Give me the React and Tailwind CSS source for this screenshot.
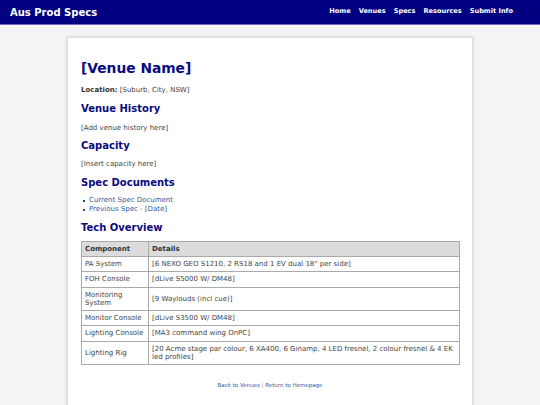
export default function App() {
  const rows = [
    ['PA System', '[6 NEXO GEO S1210, 2 RS18 and 1 EV dual 18" per side]'],
    ['FOH Console', '[dLive S5000 W/ DM48]'],
    ['Monitoring System', '[9 Waylouds (incl cue)]'],
    ['Monitor Console', '[dLive S3500 W/ DM48]'],
    ['Lighting Console', '[MA3 command wing OnPC]'],
    ['Lighting Rig', '[20 Acme stage par colour, 6 XA400, 6 Ginamp, 4 LED fresnel, 2 colour fresnel & 4 EK led profiles]'],
  ];

  return (
    <div className="min-h-screen bg-[#f4f4f4] font-['DejaVu_Sans',Verdana,sans-serif] text-[#444]">
      {/* Header */}
      <div className="h-[25px] bg-[#000080] border-b border-[#6a6ac8] flex items-center justify-between pl-[10px] pr-[27px]">
        <div className="text-white font-bold text-[10px]">Aus Prod Specs</div>
        <div className="flex gap-[8px] text-white font-bold text-[6.6px]">
          <a href="#">Home</a>
          <a href="#">Venues</a>
          <a href="#">Specs</a>
          <a href="#">Resources</a>
          <a href="#">Submit Info</a>
        </div>
      </div>

      {/* Main card */}
      <div className="w-[406px] mx-auto mt-[12px] bg-white border border-[#dcdcdc] shadow-[0_0_4px_rgba(0,0,0,0.12)] pt-[21px] px-[13px] pb-[30px]">
        <h1 className="text-[13.8px] leading-[18px] font-bold text-[#0a0a80]">[Venue Name]</h1>
        <p className="mt-[8px] text-[7px] leading-[10px]"><span className="font-bold text-[#333]">Location:</span> [Suburb, City, NSW]</p>

        <h2 className="mt-[7px] text-[10px] leading-[14px] font-bold text-[#0a0a80]">Venue History</h2>
        <p className="mt-[7px] text-[7px] leading-[10px]">[Add venue history here]</p>

        <h2 className="mt-[6px] text-[10px] leading-[14px] font-bold text-[#0a0a80]">Capacity</h2>
        <p className="mt-[6px] text-[7px] leading-[10px]">[Insert capacity here]</p>

        <h2 className="mt-[7px] text-[10px] leading-[14px] font-bold text-[#0a0a80]">Spec Documents</h2>
        <ul className="mt-[6px] text-[7px] leading-[9px] text-[#33599e]">
          <li className="flex items-center">
            <span className="w-[2px] h-[2px] bg-[#444] ml-[2px] mr-[4px]"></span>
            <a href="#">Current Spec Document</a>
          </li>
          <li className="flex items-center">
            <span className="w-[2px] h-[2px] bg-[#444] ml-[2px] mr-[4px]"></span>
            <a href="#">Previous Spec - [Date]</a>
          </li>
        </ul>

        <h2 className="mt-[7px] text-[10px] leading-[14px] font-bold text-[#0a0a80]">Tech Overview</h2>
        <table className="mt-[6px] w-[379px] border-collapse text-[7px] leading-[8px]">
          <thead>
            <tr className="bg-[#dcdcdc]">
              <th className="w-[67px] border border-[#aaa] px-[3px] py-[3px] text-left font-bold text-[#333]">Component</th>
              <th className="border border-[#aaa] px-[3px] py-[3px] text-left font-bold text-[#333]">Details</th>
            </tr>
          </thead>
          <tbody className="leading-[8.25px]">
            {rows.map(([c, d]) => (
              <tr key={c}>
                <td className="border border-[#aaa] px-[3px] py-[3px] align-middle">{c}</td>
                <td className="border border-[#aaa] px-[3px] py-[3px] align-middle">{d}</td>
              </tr>
            ))}
          </tbody>
        </table>

        <p className="mt-[16px] text-center text-[5.5px] leading-[8px] text-[#999]">
          <a href="#" className="text-[#33599e]">Back to Venues</a> | <a href="#" className="text-[#33599e]">Return to Homepage</a>
        </p>
      </div>
    </div>
  );
}
